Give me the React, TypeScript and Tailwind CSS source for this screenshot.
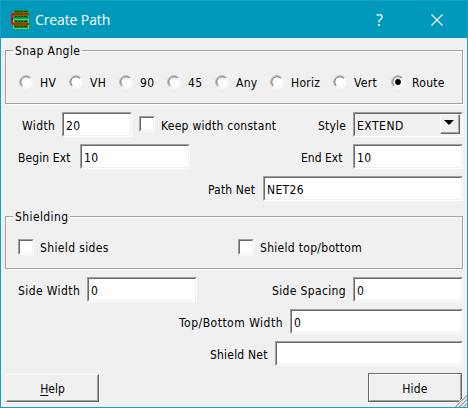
import type { ReactNode } from "react";

const shadowSunken =
  "border border-t-[#a0a0a0] border-l-[#a0a0a0] border-r-white border-b-white";
const shadowInner =
  "border border-t-[#696969] border-l-[#696969] border-r-[#f0f0f0] border-b-[#f0f0f0]";

function Text({ className = "", children }: { className?: string; children: ReactNode }) {
  return <span className={`block shrink-0 whitespace-nowrap leading-[16px] ${className}`}>{children}</span>;
}

function Field({ value, className }: { value: string; className: string }) {
  return (
    <div className={`h-[25px] shrink-0 ${shadowSunken} ${className}`}>
      <div className={`h-full bg-white pl-[2px] pt-[4px] ${shadowInner}`}>
        <Text className="tracking-[0.35px]">{value}</Text>
      </div>
    </div>
  );
}

function Check() {
  return (
    <div className={`h-[16px] w-[16px] shrink-0 ${shadowSunken}`}>
      <div className={`h-full bg-white ${shadowInner}`} />
    </div>
  );
}

function Radio({ label, checked, className }: { label: string; checked?: boolean; className: string }) {
  return (
    <div className={`flex shrink-0 items-start ${className}`}>
      <svg width="14" height="14" viewBox="0 0 14 14" className="mr-[7px] shrink-0">
        <circle cx="7" cy="7" r="6.6" fill="#fff" />
        <path d="M3 11A5.7 5.7 0 0 0 11 3" fill="none" stroke="#ececec" strokeWidth="0.8" />
        <path d="M2.6 11.4A6.2 6.2 0 0 1 11.4 2.6" fill="none" stroke="#a0a0a0" strokeWidth="1" />
        <path d="M3.3 10.7A5.2 5.2 0 0 1 10.7 3.3" fill="none" stroke="#777" strokeWidth="1" />
        {checked && <circle cx="7" cy="7" r="2.9" fill="#000" />}
      </svg>
      <Text className="tracking-[0.3px]">{label}</Text>
    </div>
  );
}

function Group({ title, gap, className, children }: { title: string; gap: string; className: string; children: ReactNode }) {
  return (
    <div className={`relative w-[458px] border border-[#a0a0a0] shadow-[1px_1px_0_#fff,inset_1px_1px_0_#fff] ${className}`}>
      <div className={`absolute left-[7px] top-[-8px] bg-[#f0f0f0] pl-[2px] ${gap}`}>
        <Text className="tracking-[0.4px]">{title}</Text>
      </div>
      {children}
    </div>
  );
}

function PathIcon() {
  return (
    <svg width="20" height="21" viewBox="0 0 20 21" shapeRendering="crispEdges">
      <path d="M3 1h14v8H3z" fill="#0a9a10" />
      <path d="M2 10h16v10H2z" fill="#78c830" />
      <path d="M3 11h14v8H3z" fill="#0a9a10" />
      <path d="M4 2h2v1H4zM7 2h2v1H7zM10 2h2v1h-2zM13 2h3v1h-3zM4 7h2v1H4zM7 7h2v1H7zM10 7h2v1h-2zM13 7h3v1h-3zM4 12h2v1H4zM7 12h2v1H7zM10 12h2v1h-2zM13 12h3v1h-3zM4 17h2v1H4zM7 17h2v1H7zM10 17h2v1h-2zM13 17h3v1h-3z" fill="#063a0c" />
      <path d="M1 4h17v2H2v8h16v2H1l-1-1V5z" fill="#f00" />
      <path d="M0 9h2v2H0z" fill="#702020" />
    </svg>
  );
}

export default function App() {
  return (
    <div className="relative flex h-[408px] w-[468px] flex-col overflow-hidden border border-t-0 border-[#18a0c0] bg-[#f0f0f0] font-['DejaVu_Sans_Condensed','DejaVu_Sans',sans-serif] text-[12px] text-black">
      <header className="flex h-[38px] shrink-0 items-center border-t border-[#18a0c0] bg-[#0099bc] pl-[10px] text-white">
        <PathIcon />
        <span className="ml-[4px] w-[331px] font-['Open_Sans','Noto_Sans',sans-serif] text-[14px] leading-[20px] tracking-[-0.12px]">Create Path</span>
        <span className="ml-[10px] w-[10px] font-['Open_Sans',sans-serif] text-[16px]">?</span>
        <svg width="12" height="12" viewBox="0 0 12 12" className="ml-[45px]">
          <path d="M.5.5l11 11m0-11l-11 11" stroke="#fff" strokeWidth="1.1" />
        </svg>
      </header>

      <main className="flex flex-1 flex-col pl-[4px]">
        <Group title="Snap Angle" gap="w-[69px]" className="mt-[12px] flex h-[54px] items-start pl-[13px] pt-[24px]">
          <Radio label="HV" className="w-[50px]" />
          <Radio label="VH" className="w-[50px]" />
          <Radio label="90" className="w-[48px]" />
          <Radio label="45" className="w-[48px]" />
          <Radio label="Any" className="w-[55px]" />
          <Radio label="Horiz" className="w-[63px]" />
          <Radio label="Vert" className="w-[58px]" />
          <Radio label="Route" checked className="w-[60px]" />
        </Group>

        <div className="mt-[8px] flex h-[25px] items-start pl-[17px]">
          <Text className="w-[40px] pt-[6px] tracking-[0.4px]">Width</Text>
          <Field value="20" className="w-[70px]" />
          <div className="ml-[7px] mt-[4px] flex items-start gap-[6px]">
            <Check />
            <Text className="w-[157px] pt-[2px] tracking-[0.27px]">Keep width constant</Text>
          </div>
          <Text className="w-[35px] pt-[6px] tracking-[0.2px]">Style</Text>
          <div className={`h-[25px] w-[110px] ${shadowSunken}`}>
            <div className={`flex h-full items-start justify-between pl-[2px] pr-[1px] ${shadowInner}`}>
              <Text className="pt-[4px] tracking-[0.5px]">EXTEND</Text>
              <div className="flex h-[20px] w-[20px] items-center justify-center border border-t-white border-l-white border-r-[#696969] border-b-[#696969] pr-[3px] shadow-[inset_-1px_-1px_0_#a0a0a0]">
                <svg width="10" height="5" viewBox="0 0 10 5" className="-mt-[3px] shrink-0"><path d="M0 0h10L5 5z" /></svg>
              </div>
            </div>
          </div>
        </div>

        <div className="mt-[7px] flex h-[25px] items-start pl-[13px]">
          <Text className="w-[62px] pt-[6px] tracking-[0.1px]">Begin Ext</Text>
          <Field value="10" className="w-[110px]" />
          <Text className="ml-[111px] w-[52px] pt-[6px]">End Ext</Text>
          <Field value="10" className="w-[110px]" />
        </div>
        <div className="mt-[7px] flex h-[25px] items-start pl-[203px]">
          <Text className="w-[55px] pt-[6px] tracking-[0.15px]">Path Net</Text>
          <Field value="NET26" className="w-[200px]" />
        </div>

        <Group title="Shielding" gap="w-[57px]" className="mt-[15px] flex h-[53px] items-start pl-[12px] pt-[22px]">
          <Check />
          <Text className="ml-[6px] w-[198px] pt-[1px] tracking-[0.37px]">Shield sides</Text>
          <Check />
          <Text className="ml-[6px] pt-[1px] tracking-[0.3px]">Shield top/bottom</Text>
        </Group>

        <div className="mt-[8px] flex h-[25px] items-start pl-[13px]">
          <Text className="w-[69px] pt-[6px] tracking-[0.4px]">Side Width</Text>
          <Field value="0" className="w-[110px]" />
          <Text className="ml-[75px] w-[81px] pt-[6px] tracking-[0.35px]">Side Spacing</Text>
          <Field value="0" className="w-[110px]" />
        </div>
        <div className="mt-[7px] flex h-[25px] items-start pl-[174px]">
          <Text className="w-[111px] pt-[6px] tracking-[0.5px]">Top/Bottom Width</Text>
          <Field value="0" className="w-[173px]" />
        </div>
        <div className="mt-[7px] flex h-[25px] items-start pl-[205px]">
          <Text className="w-[65px] pt-[6px] tracking-[0.2px]">Shield Net</Text>
          <Field value="" className="w-[188px]" />
        </div>

        <div className="mt-[7px] flex items-start justify-between pl-[1px] pr-[5px]">
          <button className="mt-[1px] flex h-[28px] w-[93px] items-start justify-center border border-t-white border-l-white border-r-[#696969] border-b-[#696969] pt-[6px] shadow-[inset_-1px_-1px_0_#a0a0a0]">
            <Text><span className="underline underline-offset-2">H</span>elp</Text>
          </button>
          <button className="h-[29px] w-[94px] border border-[#696969]">
            <span className="flex h-full items-start justify-center border border-t-white border-l-white border-r-[#a0a0a0] border-b-[#a0a0a0] pt-[6px]">
              <Text className="tracking-[0.2px]">Hide</Text>
            </span>
          </button>
        </div>
      </main>
      <svg width="13" height="13" viewBox="0 0 13 13" className="absolute bottom-0 right-0">
        <path d="M0 13L13 0v13z" fill="#f0f0f0" />
        <path d="M1 13L13 1M5 13L13 5M9 13L13 9" stroke="#a0a0a0" strokeWidth="1.8" />
        <path d="M0 13L13 0M4 13L13 4M8 13L13 8" stroke="#fff" />
      </svg>
    </div>
  );
}
